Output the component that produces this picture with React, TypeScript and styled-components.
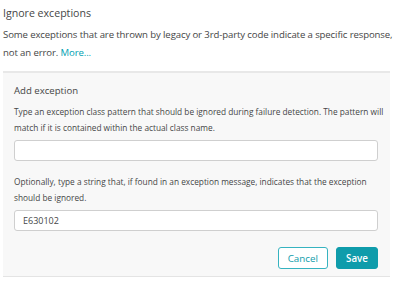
import React from "react";
import * as styledComponents from "styled-components";

const styled = styledComponents.default;
const { createGlobalStyle } = styledComponents;

const GlobalStyle = createGlobalStyle`
  html, body {
    margin: 0;
    padding: 0;
    background: #fff;
  }
  body {
    font-family: "Open Sans", "Noto Sans", sans-serif;
    color: #454646;
  }
`;

export default function App() {
  return (
    <>
      <GlobalStyle />
      <Page>
        <Title>Ignore exceptions</Title>
        <Intro>
          Some exceptions that are thrown by legacy or 3rd-party code indicate a
          specific response, not an error. <Link href="#">More...</Link>
        </Intro>

        <Panel>
          <PanelTitle>Add exception</PanelTitle>
          <Hint>
            Type an exception class pattern that should be ignored during failure
            detection. The pattern will match if it is contained within the actual
            class name.
          </Hint>
          <Field type="text" defaultValue="" />

          <Hint $spaced>
            Optionally, type a string that, if found in an exception message,
            indicates that the exception should be ignored.
          </Hint>
          <Field type="text" defaultValue="E630102" />

          <Actions>
            <Button $variant="secondary">Cancel</Button>
            <Button $variant="primary">Save</Button>
          </Actions>
        </Panel>
      </Page>
    </>
  );
}

const Page = styled.div`
  width: 399px;
  padding: 4px 0 0 3px;
  box-sizing: border-box;
`;

const Title = styled.div`
  font-size: 10.6px;
  line-height: 18px;
  color: #454646;
`;

const Intro = styled.p`
  margin: 4px 0 0;
  width: 396px;
  font-size: 9.6px;
  letter-spacing: -0.12px;
  line-height: 18px;
  color: #454646;
`;

const Link = styled.a`
  color: #00a1b2;
  text-decoration: none;
`;

const Panel = styled.section`
  margin-top: 9px;
  width: 387px;
  box-sizing: border-box;
  padding: 10px 12px 7px 11px;
  background: #f8f8f8;
  border-top: 2px solid #e8e8e8;
  border-bottom: 1px solid #e4e4e4;
  display: flex;
  flex-direction: column;
`;

const PanelTitle = styled.div`
  font-size: 9.6px;
  line-height: 16px;
`;

const Hint = styled.p<{ $spaced?: boolean }>`
  margin: ${p => (p.$spaced ? "13px" : "5px")} -10px 0 0;
  font-size: 8.3px;
  line-height: 16px;
  color: #454646;
`;

const Field = styled.input`
  margin-top: 4px;
  height: 21px;
  box-sizing: border-box;
  padding: 0 8px;
  border: 1px solid #cfcfcf;
  border-radius: 3px;
  background: #fff;
  font-family: inherit;
  font-size: 9px;
  color: #454646;
  outline: none;
`;

const Actions = styled.div`
  margin-top: 16px;
  display: flex;
  justify-content: flex-end;
  gap: 8px;
`;

const Button = styled.button<{ $variant: "primary" | "secondary" }>`
  height: 22px;
  box-sizing: border-box;
  padding: 0 9px;
  min-width: ${p => (p.$variant === "primary" ? "42px" : "50px")};
  border-radius: 3px;
  border: 1px solid ${p => (p.$variant === "primary" ? "#0f9cab" : "#36b3c0")};
  background: ${p => (p.$variant === "primary" ? "#0f9cab" : "#fff")};
  color: ${p => (p.$variant === "primary" ? "#fff" : "#0f9cab")};
  font-family: inherit;
  font-size: 9.8px;
  font-weight: ${p => (p.$variant === "primary" ? 600 : 400)};
  cursor: pointer;
`;
